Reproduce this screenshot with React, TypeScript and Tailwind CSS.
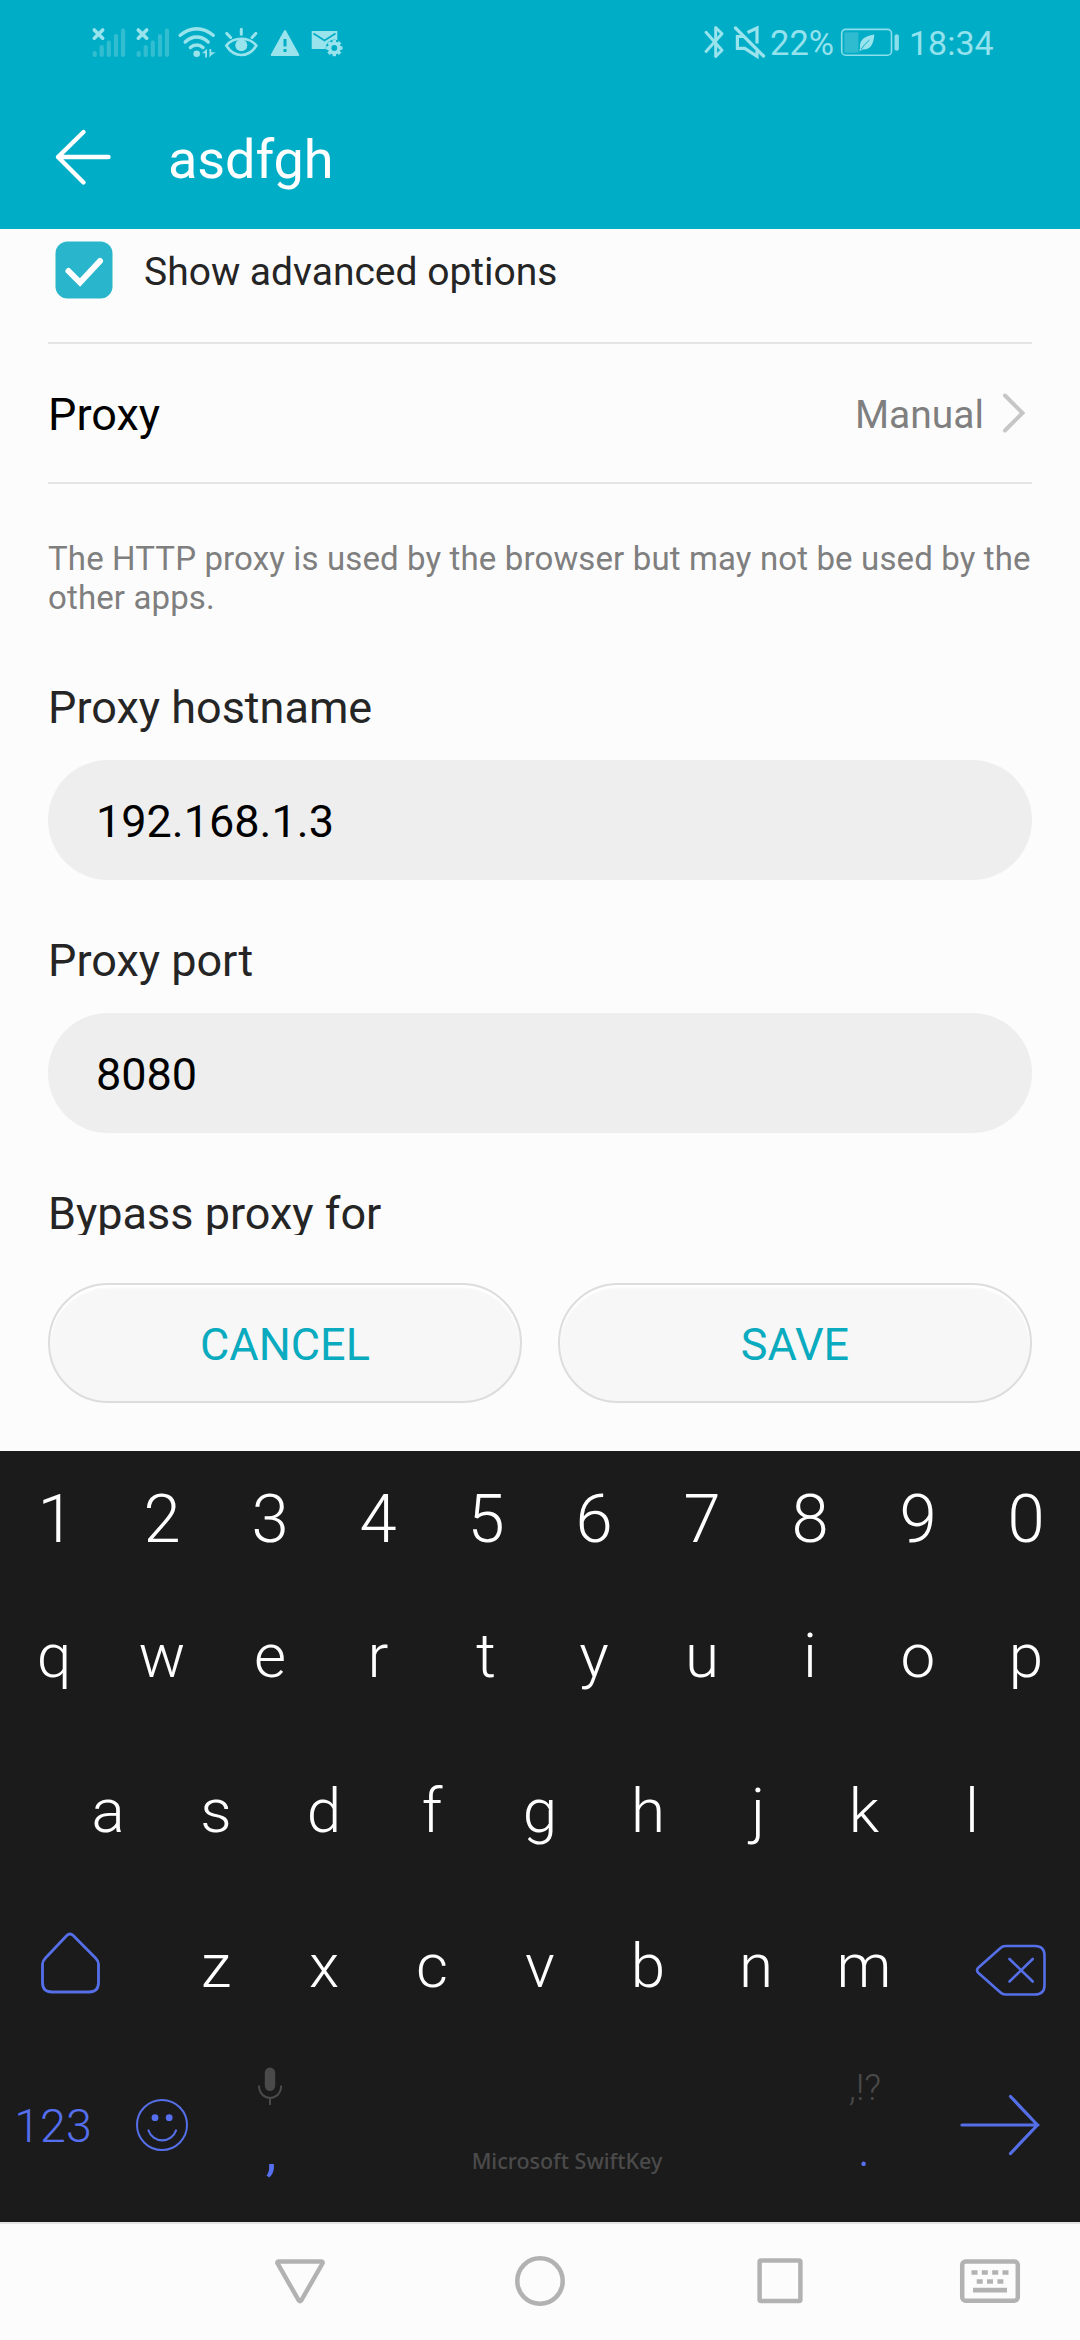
import type { ReactNode } from "react";

type IconProps = {
  box: string;
  w: number;
  h: number;
  className?: string;
  children: ReactNode;
};

function Icon({ box, w, h, className = "", children }: IconProps) {
  return (
    <svg viewBox={box} width={w} height={h} fill="none" className={`block shrink-0 ${className}`}>
      {children}
    </svg>
  );
}

function Signal() {
  return (
    <Icon box="0 0 40 40" w={40} h={40}>
      <g stroke="#33bdd1" strokeWidth="4.2" strokeLinecap="round">
        <path d="M6.7 32v-2M13.7 32v-8M20.800 32V19.500M28 32V13M35 32V7.500" />
      </g>
      <path d="M6.300 7l8.400 8.200M14.700 7l-8.400 8.200" stroke="#99e3ec" strokeWidth="3.6" strokeLinecap="round" />
    </Icon>
  );
}

function Wifi() {
  return (
    <Icon box="176 23 42 40" w={42} h={40}>
      <g stroke="#99e3ec" strokeWidth="3.4" strokeLinecap="round">
        <path d="M180.200 35.300Q188 28.700 196.700 28.700T213.200 35.300" />
        <path d="M185.200 42Q190.500 37 196.700 37T208.200 42" />
        <path d="M190.400 47.500Q193 45 196.700 45T203 47.500" />
      </g>
      <circle cx="196.700" cy="53.700" r="3.300" fill="#99e3ec" />
      <path d="M202 53.300l5-4.500v8.600h-1.800v-4.100zM209.400 49v8.700l1.600-2.200 4.500-3.200h-4.300V49z" fill="#99e3ec" />
    </Icon>
  );
}

function Eye() {
  return (
    <Icon box="223 23 37 40" w={37} h={40}>
      <path d="M226.300 45.500Q232 38.800 241.300 38.800T256.400 45.500Q250.500 55 241.300 55T226.300 45.500z" stroke="#99e3ec" strokeWidth="2.600" />
      <circle cx="241.300" cy="45.200" r="6" fill="#99e3ec" />
      <path d="M241.300 29.200v5M226.800 33.400l3.800 4.200M255.800 33.400l-3.800 4.200" stroke="#99e3ec" strokeWidth="3" strokeLinecap="round" />
    </Icon>
  );
}

function Warning() {
  return (
    <Icon box="268 23 34 40" w={34} h={40}>
      <path d="M285 31l13.300 24h-26.600z" fill="#99e3ec" stroke="#99e3ec" strokeWidth="2" strokeLinejoin="round" />
      <path d="M285 39v7.500M285 49v3" stroke="#00adc6" strokeWidth="3" />
    </Icon>
  );
}

const gearTeeth = [0, 45, 90, 135, 180, 225, 270, 315];

function MailSettings() {
  return (
    <Icon box="309 23 36 40" w={36} h={40}>
      <path d="M311.700 31h25.600v18h-25.600z" fill="#99e3ec" />
      <path d="M313.500 33.500l11 7 11-7" stroke="#00adc6" strokeWidth="1.800" />
      <circle cx="334.300" cy="48" r="8.600" fill="#00adc6" />
      {gearTeeth.map((a) => (
        <path key={a} d="M332.600 39.800h3.400v4h-3.400z" fill="#99e3ec" transform={`rotate(${a} 334.3 48)`} />
      ))}
      <circle cx="334.300" cy="48" r="4.700" stroke="#99e3ec" strokeWidth="3.600" />
    </Icon>
  );
}

function StatusBar() {
  return (
    <div className="flex h-[86px] items-center justify-between pl-[88px] pr-[87px] text-[34px] leading-none text-[#93e2ed]">
      <div className="flex items-center">
        <Signal />
        <div className="w-1" />
        <Signal />
        <div className="w-1" />
        <Wifi />
        <div className="w-[5px]" />
        <Eye />
        <div className="w-2" />
        <Warning />
        <div className="w-[7px]" />
        <MailSettings />
      </div>
      <div className="flex items-center">
        <Icon box="702 23 26 40" w={26} h={40}>
          <path
            d="M706 32.300L722 50.200l-6.300 6.300V27.500l6.300 6.300L706 51.500"
            stroke="#99e3ec"
            strokeWidth="3"
            strokeLinecap="round"
            strokeLinejoin="round"
          />
        </Icon>
        <Icon box="728 23 42 40" w={42} h={40}>
          <g stroke="#99e3ec" strokeWidth="3.2">
            <path d="M747.500 32.500l9.500-4.500v15.500" />
            <path d="M744 36.500h-6.600v11.800h7.400l12.200 8V50.500" />
            <path d="M735.500 28l28 28" strokeLinecap="round" />
          </g>
        </Icon>
        <span className="w-[68px] text-[34.500px]">22%</span>
        <Icon box="838 23 64 40" w={64} h={40}>
          <rect x="841.700" y="29.400" width="49.800" height="25.800" rx="4" stroke="#8adfea" strokeWidth="1.600" />
          <path d="M844.400 32.300h14v20.500h-14z" fill="#2fbbd0" />
          <path d="M894.500 36.500a2.200 2.200 0 0 1 4.400 0v12a2.200 2.200 0 0 1-4.400 0z" fill="#8adfea" />
          <path d="M874.300 34.500C873.800 44 870.500 50 862.500 49.500L860 51l-.8-.8 1-1.600C858.800 40.500 864 36 874.300 34.500z" fill="#99e3ec" />
          <path d="M861 49.500q3.500-5.500 8.500-9.500" stroke="#10b2ca" strokeWidth="1" />
        </Icon>
        <span className="w-[91px] pl-[7px]">18:34</span>
      </div>
    </div>
  );
}

function Field({ label, value }: { label: string; value: string }) {
  return (
    <div className="mb-[51px]">
      <div className="mb-[22px] h-[60px] leading-[60px] text-[#252525]">{label}</div>
      <div className="flex h-[120px] items-center rounded-full bg-[#eeeeee] pl-12 pt-[3px] leading-none text-black">{value}</div>
    </div>
  );
}

function ActionButton({ children }: { children: string }) {
  return (
    <button className="h-[120px] flex-1 rounded-full border-2 border-[#dddddd] bg-[#f7f7f7] pt-[3px] text-[45px] leading-none text-[#0aabbf] shadow-[inset_0_3px_2px_#ffffff]">
      {children}
    </button>
  );
}

function LetterRow({ letters }: { letters: string }) {
  return (
    <>
      {letters.split("").map((l) => (
        <div key={l} className={l === "1" || l === "j" ? "w-[108px] pl-1 text-center" : "w-[108px] text-center"}>
          {l}
        </div>
      ))}
    </>
  );
}

function Keyboard() {
  return (
    <div className="h-[771px] bg-[#1b1b1b] font-light text-white">
      <div className="flex h-[127px] items-center pt-2.5 text-[67px] leading-none">
        <LetterRow letters="1234567890" />
      </div>
      <div className="text-[62px] leading-none">
        <div className="flex h-[155px] items-center">
          <LetterRow letters="qwertyuiop" />
        </div>
        <div className="flex h-[155px] items-center justify-center">
          <LetterRow letters="asdfghjkl" />
        </div>
        <div className="flex h-[155px] items-center">
          <div className="w-[162px] pb-[5px] pl-[38px]">
            <Icon box="38 1930 64 66" w={64} h={66}>
              <path
                d="M66.800 1935.500q3.200-3 6.400 0L95.500 1958q3 3 3 6v18.500q0 9.500-9.500 9.500H52q-9.500 0-9.500-9.500V1964q0-3 3-6z"
                stroke="#556fe8"
                strokeWidth="2.800"
              />
            </Icon>
          </div>
          <LetterRow letters="zxcvbnm" />
          <div className="w-[162px] pl-[54px] pt-2">
            <Icon box="972 1942 78 56" w={78} h={56}>
              <path
                d="M978.500 1967.500L1000.500 1948q2-2 5-2H1035q9.500 0 9.500 9.500v29.500q0 9.500-9.500 9.500h-29.500q-3 0-5-2L978.500 1973q-3-2.700 0-5.500z"
                stroke="#556fe8"
                strokeWidth="2.600"
              />
              <path d="M1009.500 1959l23.200 22.500M1032.700 1959l-23.200 22.500" stroke="#556fe8" strokeWidth="2.600" strokeLinecap="round" />
            </Icon>
          </div>
        </div>
      </div>
      <div className="flex h-[163px] items-center text-[#556fef]">
        <div className="w-[108px] pr-0.5 pt-[3px] text-center text-[46.500px] leading-none">123</div>
        <div className="flex w-[108px] justify-center">
          <Icon box="134 2097 56 56" w={56} h={56}>
            <circle cx="162" cy="2125" r="25" stroke="#556fe8" strokeWidth="2" />
            <circle cx="155" cy="2117.700" r="3.400" fill="#556fef" />
            <circle cx="169.200" cy="2117.700" r="3.400" fill="#556fef" />
            <path d="M148.500 2130.500a14.500 14.500 0 0 0 27.500 0" stroke="#556fe8" strokeWidth="2.200" strokeLinecap="round" />
          </Icon>
        </div>
        <div className="flex h-full w-[108px] flex-col items-center pt-[22px]">
          <Icon box="256 2065 28 42" w={28} h={42}>
            <rect x="264.800" y="2067.500" width="10.400" height="23.500" rx="5.200" fill="#4a4a4a" />
            <path d="M259 2085.500c0 16.500 22.200 16.500 22.200 0M270 2098v7" stroke="#4a4a4a" strokeWidth="2" />
          </Icon>
          <div className="mt-[18px] pl-0.5 text-[54px] font-normal leading-none">,</div>
        </div>
        <div className="flex h-full w-[486px] justify-center pt-[102px] font-['Noto_Sans'] text-[21.500px] font-medium leading-[32px] text-[#4b4b4b]">
          <span>Microsoft SwiftKey</span>
        </div>
        <div className="flex h-full w-[108px] flex-col items-center pt-[26px]">
          <div className="pl-0.5 text-[37px] leading-[37px] text-[#4a4a4a]">,!?</div>
          <div className="mt-[15px] text-[54px] leading-none">.</div>
        </div>
        <div className="w-[162px] pl-[41px]">
          <Icon box="958 2092 84 66" w={84} h={66}>
            <path d="M961 2125h76M1009.500 2096.500l27 28.500-27 28.500" stroke="#556fe8" strokeWidth="3.200" strokeLinejoin="round" strokeLinecap="round" />
          </Icon>
        </div>
      </div>
    </div>
  );
}

function NavBar() {
  return (
    <div className="flex h-[118px] border-t-2 border-[#e4e2e4] pt-[29px]">
      <Icon box="272 2253 56 56" w={56} h={56} className="ml-[272px]">
        <path d="M278.700 2261.500h42.600q2.200 0 1 2.200L301.200 2300.500q-1.200 1.600-2.400 0L277.700 2263.700q-1.200-2.200 1-2.200z" stroke="#b2b2b2" strokeWidth="4.400" />
      </Icon>
      <Icon box="512 2253 56 56" w={56} h={56} className="ml-[184px]">
        <circle cx="540" cy="2281" r="22.700" stroke="#b2b2b2" strokeWidth="4.500" />
      </Icon>
      <Icon box="752 2253 56 56" w={56} h={56} className="ml-[184px]">
        <rect x="759.600" y="2260.500" width="40.800" height="40.500" rx="1.500" stroke="#b2b2b2" strokeWidth="4.500" />
      </Icon>
      <Icon box="956 2253 68 56" w={68} h={56} className="ml-[148px]">
        <rect x="962.200" y="2261.500" width="55.600" height="39.200" rx="3.500" stroke="#b2b2b2" strokeWidth="4.500" />
        <path
          d="M971.500 2272.500h6m4.300 0h6m4.400 0h6m4.300 0h6M976.700 2281.500h6m4.300 0h6m4.400 0h6M973 2290.200h34"
          stroke="#b2b2b2"
          strokeWidth="4.700"
        />
      </Icon>
    </div>
  );
}

export default function App() {
  return (
    <div className="h-[2340px] w-[1080px] overflow-hidden bg-[#fcfcfc] font-['Roboto',sans-serif] text-[45px]">
      <header className="h-[229px] bg-[#00adc6]">
        <StatusBar />
        <div className="flex h-[143px] items-center pl-[52px]">
          <Icon box="52 126 62 62" w={62} h={62} className="mb-[2px]">
            <path d="M58 157h50.500M83.500 132L58 157l25.500 25.500" stroke="#ffffff" strokeWidth="4.4" strokeLinecap="round" strokeLinejoin="round" />
          </Icon>
          <h1 className="pl-[54px] pt-[5px] text-[54px] leading-none tracking-[-0.1px] text-white">asdfgh</h1>
        </div>
      </header>

      <main className="h-[1006px] overflow-hidden px-12">
        <div className="flex h-[115px] items-center border-b-2 border-[#e5e5e5] pb-[31px] pl-[7px]">
          <Icon box="0 0 58 58" w={58} h={58}>
            <rect x="0.500" y="0.500" width="57" height="57" rx="12" fill="#29b6cc" />
            <path d="M13.500 30l11.500 11.500 20-21.500" stroke="#ffffff" strokeWidth="6" strokeLinecap="round" />
          </Icon>
          <span className="pl-[31px] pt-[5px] text-[39px] leading-none text-[#252525]">Show advanced options</span>
        </div>
        <div className="flex h-[140px] items-center justify-between border-b-2 border-[#e5e5e5] leading-none">
          <span className="pt-[3px] text-black">Proxy</span>
          <span className="flex items-center">
            <span className="pt-[4px] text-[39px] text-[#7f7f7f]">Manual</span>
            <Icon box="1000 391 28 44" w={28} h={44} className="ml-4 mr-1">
              <path d="M1005 395.500l17.500 17.500-17.500 17.500" stroke="#c6c6c6" strokeWidth="4" strokeLinecap="round" />
            </Icon>
          </span>
        </div>
        <p className="mb-[61px] w-[1000px] pt-[55px] text-[33px] leading-[39px] tracking-[0.13px] text-[#7f7f7f]">
          The HTTP proxy is used by the browser but may not be used by the
          <br />
          other apps.
        </p>
        <Field label="Proxy hostname" value="192.168.1.3" />
        <Field label="Proxy port" value="8080" />
        <div className="h-[60px] leading-[60px] text-[#252525]">Bypass proxy for</div>
      </main>

      <div className="flex gap-9 px-12 py-12">
        <ActionButton>CANCEL</ActionButton>
        <ActionButton>SAVE</ActionButton>
      </div>

      <Keyboard />
      <NavBar />
    </div>
  );
}
